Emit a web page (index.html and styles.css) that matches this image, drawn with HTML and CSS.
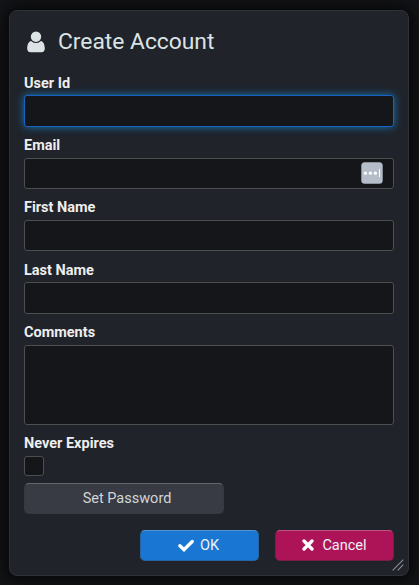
FILE: index.html
```html
<!DOCTYPE html>
<html lang="en">
<head>
<meta charset="utf-8">
<title>Create Account</title>
<link rel="stylesheet" href="styles.css">
</head>
<body>
<form class="dialog">
  <h1 class="title">
    <svg class="user-icon" viewBox="0 0 18 22"><circle cx="9" cy="5.8" r="5.2"/><path d="M4.1 9.9Q9 13.8 13.9 9.9C16.6 10.6 17.8 13.6 17.8 17.6Q17.8 21.3 14.4 21.3H3.6Q.2 21.3.2 17.6C.2 13.6 1.4 10.6 4.1 9.9Z"/><path class="neck" d="M4.4 9.6Q9 13.5 13.6 9.6"/></svg>
    <span class="title-text">Create Account</span>
  </h1>
  <div class="field"><label for="user">User Id</label><input class="input focused" id="user" type="text"></div>
  <div class="field"><label for="email">Email</label>
    <div class="with-badge"><input class="input" id="email" type="text">
      <svg class="badge" viewBox="0 0 22 22"><rect x=".3" y=".3" width="21.4" height="21.4" rx="3.5" fill="#b5bdc9"/><g fill="#fff"><circle cx="4.4" cy="11.2" r="1.6"/><circle cx="9.4" cy="11.2" r="1.6"/><circle cx="14.4" cy="11.2" r="1.6"/><rect x="18" y="7" width="1" height="8"/></g></svg>
    </div>
  </div>
  <div class="field"><label for="first">First Name</label><input class="input" id="first" type="text"></div>
  <div class="field"><label for="last">Last Name</label><input class="input" id="last" type="text"></div>
  <div class="field comments"><label for="comments">Comments</label><textarea class="input area" id="comments"></textarea></div>
  <div class="field expires"><label for="never">Never Expires</label><input class="check" id="never" type="checkbox"></div>
  <button class="button password" type="button">Set Password</button>
  <div class="actions">
    <button class="button ok" type="button"><svg class="ok-icon" viewBox="0 0 16 13"><path d="M1.9 6.7 6 10.7 14.2 2.5" fill="none" stroke="#fff" stroke-width="3.3" stroke-linecap="round"/></svg>OK</button>
    <button class="button cancel" type="button"><svg class="cancel-icon" viewBox="0 0 12 12"><path d="M2 2 10 10M10 2 2 10" fill="none" stroke="#fff" stroke-width="3.3" stroke-linecap="round"/></svg>Cancel</button>
  </div>
  <svg class="grip" viewBox="0 0 12 12"><path d="M.7 11.3 11.3.7M5.7 11.3 11.3 5.7" stroke="#8c8f94" stroke-width="1.1"/></svg>
</form>
</body>
</html>
```

FILE: styles.css
```css
* { box-sizing: border-box; }
body {
  margin: 0;
  height: 585px;
  padding: 10px 10px 0 9px;
  overflow: hidden;
  background: #131417;
  font: 15px/20px Roboto, sans-serif;
  color: #e0e3e4;
}
.dialog {
  position: relative;
  width: 400px;
  height: 566px;
  padding: 14px;
  border: 1px solid #303136;
  border-radius: 8px;
  background: #20232a;
  box-shadow: 0 0 14px 3px #050607;
}
.title {
  display: flex;
  align-items: center;
  gap: 13px;
  height: 33px;
  margin: 0 0 15.85px;
  padding-left: 3px;
  font-size: 22.8px;
  font-weight: 400;
  color: #dce3e5;
}
.title-text { padding-top: 1px; }
.user-icon { width: 18px; height: 22px; margin-top: 1px; fill: #dce3e5; }
.neck { fill: none; stroke: #20232a; stroke-width: .8; }
.field { height: 62.28px; }
.field label {
  display: block;
  height: 21.6px;
  font-weight: 700;
  font-size: 14.5px;
  color: #eeeeee;
}
.input {
  display: block;
  width: 370px;
  height: 31.4px;
  margin: 0;
  border: 1px solid #4e4e4f;
  border-radius: 3px;
  background: #15161a;
  outline: none;
}
.focused { border-color: #1565c0; box-shadow: 0 0 8px #1976b8; }
.with-badge { position: relative; }
.badge { position: absolute; left: 337px; top: 4.3px; width: 22px; height: 22px; }
.area { height: 80px; resize: none; }
.comments { height: 111.03px; }
.expires { height: 49px; }
.check {
  appearance: none;
  display: block;
  width: 20px;
  height: 20px;
  margin: 0;
  border: 1px solid #4e4e4f;
  border-radius: 3px;
  background: #15161a;
}
.button {
  display: flex;
  align-items: center;
  justify-content: center;
  height: 31px;
  padding: 1.5px 0 0;
  border: 1px solid #38393d;
  border-radius: 5px;
  font: 14.5px/20px Roboto, sans-serif;
  color: #e0e3e4;
}
.password { width: 200px; padding-left: 6px; background: #383b44; border-top-color: #64666b; color: #d2d5d7; }
.actions { display: flex; justify-content: flex-end; gap: 16px; margin-top: 16px; }
.actions .button { width: 119px; padding-right: 2px; color: #eef2f7; }
.actions .ok { background: #1976d2; border-color: #2664a3; border-top-color: #5593cf; }
.actions .cancel { background: #ad1457; border-color: #7c1d49; border-top-color: #bd5280; }
.actions .cancel { padding-right: 0; }
.ok-icon { width: 16px; height: 13px; margin: 0 6px 1.5px 0; }
.cancel-icon { width: 12px; height: 12px; margin: 0 8px 1.5px 0; }
.grip { position: absolute; right: 4px; bottom: 4px; width: 12px; height: 12px; }
```
